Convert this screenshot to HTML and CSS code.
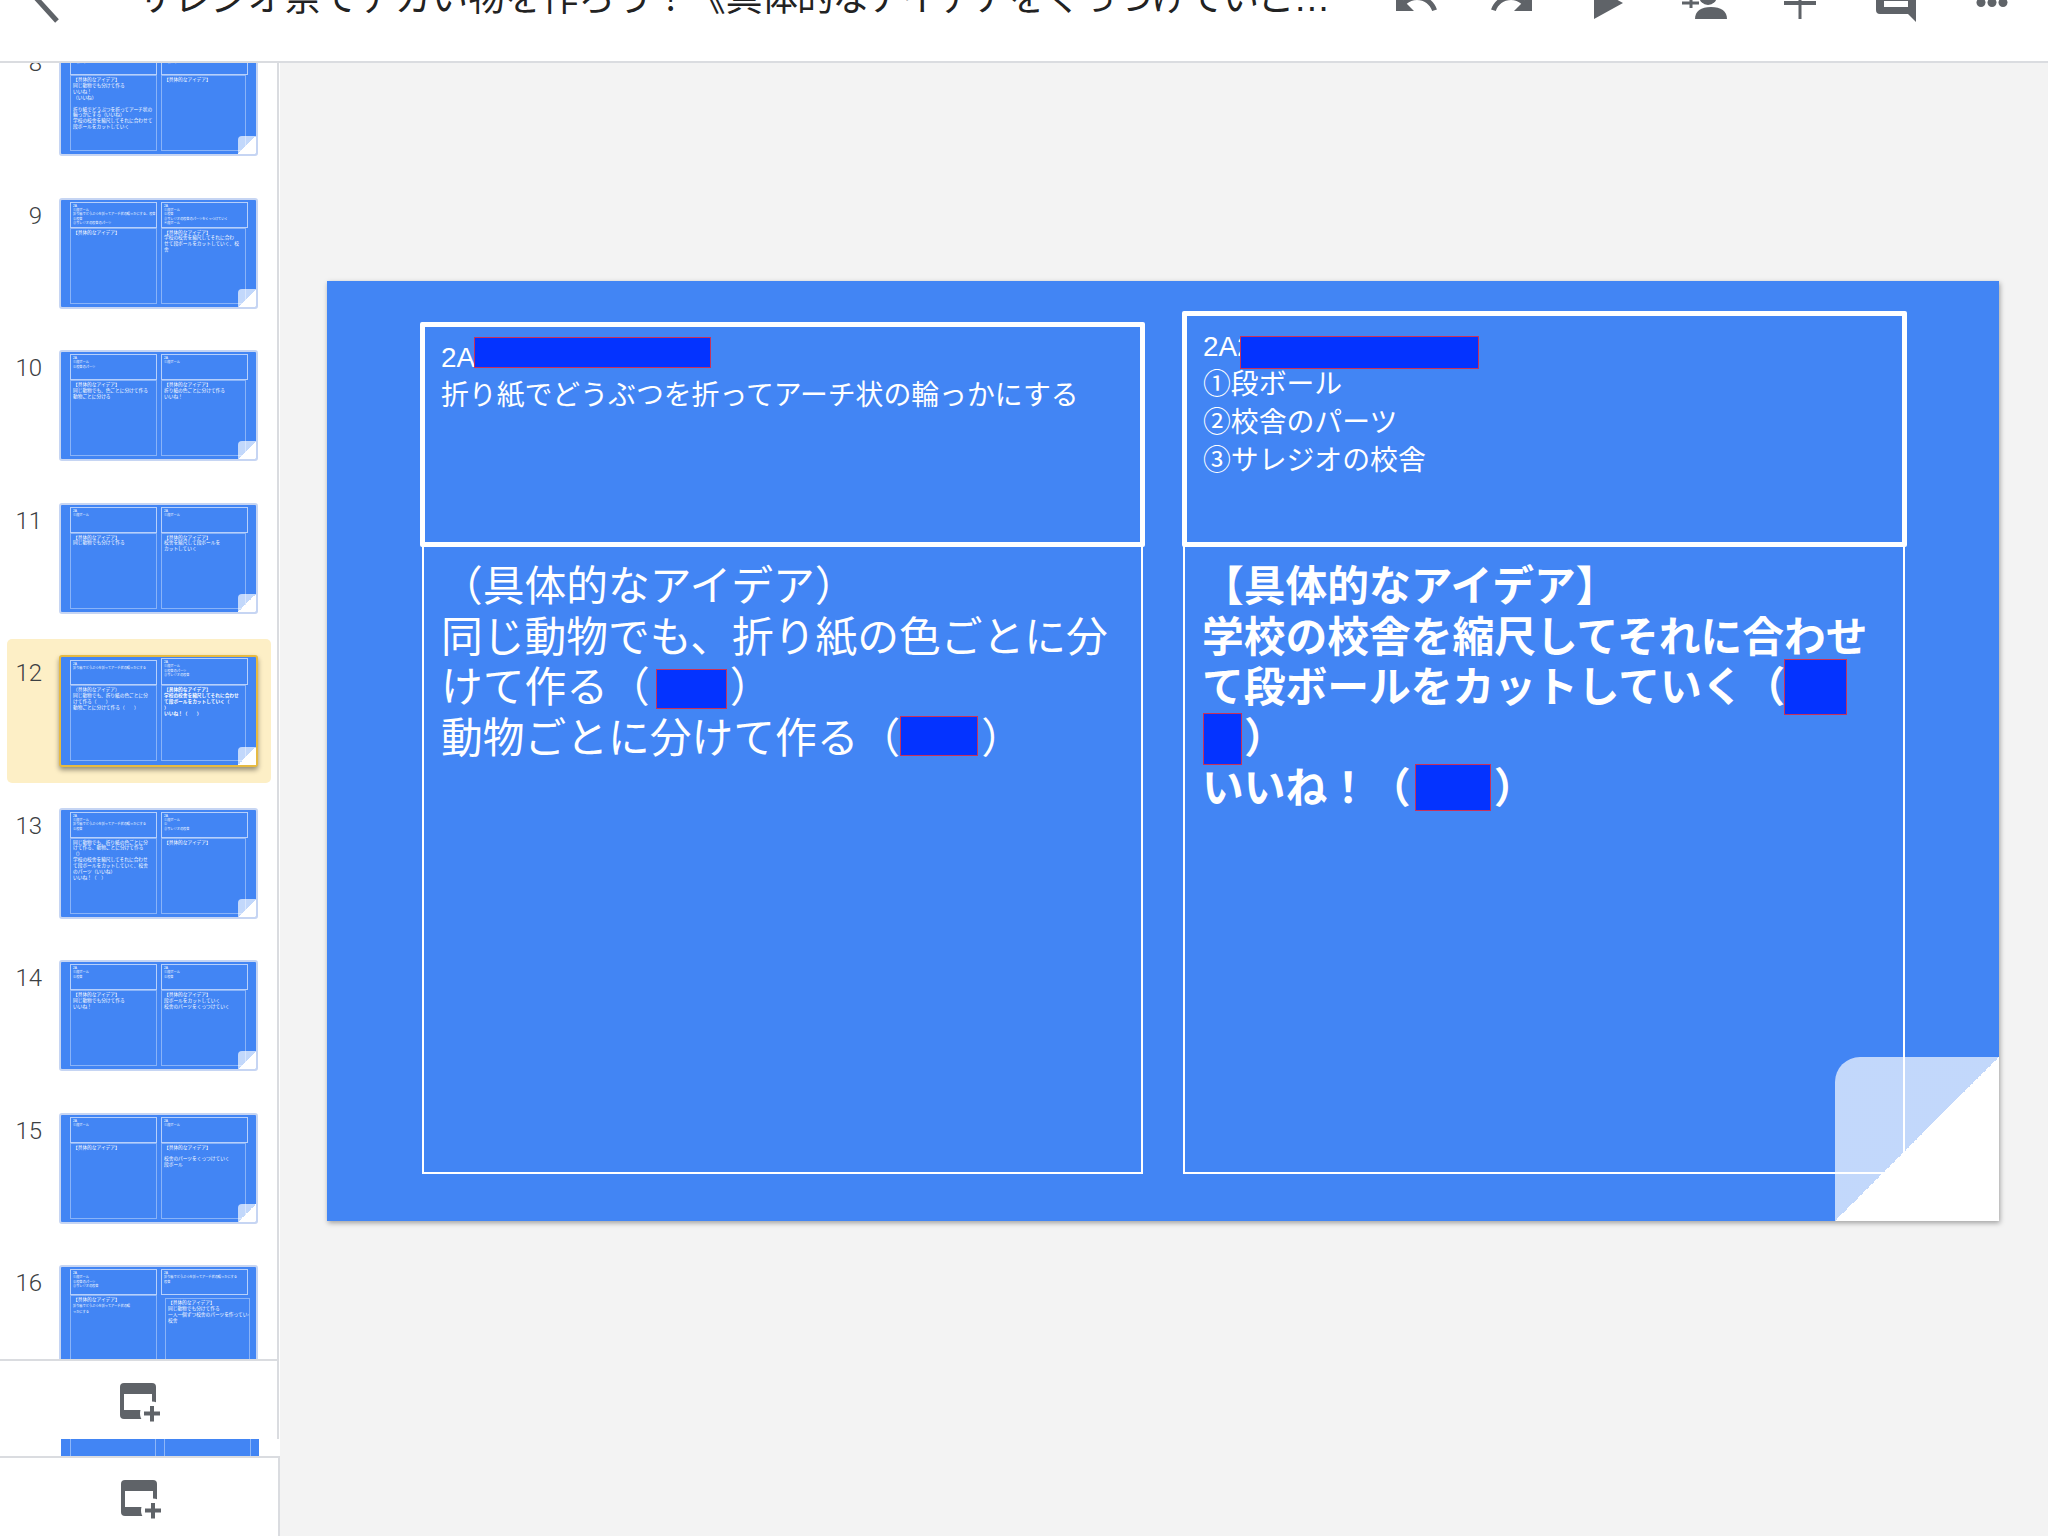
FILE: index.html
```html
<!DOCTYPE html>
<html lang="ja">
<head>
<meta charset="utf-8">
<title>Slides</title>
<link rel="stylesheet" href="styles.css">
</head>
<body>
<div class="app">
  <header class="header">
    <div class="bar">
      <svg class="back" viewBox="0 0 32 60" width="32" height="60"><path d="M26 8 L6 30 L26 52" /></svg>
      <div class="title">サレジオ祭でデカい物を作ろう！《<span class="title-rest">具体的なアイデアをくっつけていこ…</span></div>
      <div class="tools">
        <span class="tool"><svg viewBox="0 0 48 44" width="48" height="44"><path transform="scale(2)" d="M12.5 8c-2.65 0-5.05.99-6.9 2.6L2 7v9h9l-3.62-3.62c1.39-1.16 3.16-1.88 5.12-1.88 3.54 0 6.55 2.31 7.6 5.5l2.37-.78C21.08 11.03 17.15 8 12.5 8z"/></svg></span>
        <span class="tool"><svg viewBox="0 0 48 44" width="48" height="44"><path transform="scale(2)" d="M18.4 10.6C16.55 8.99 14.15 8 11.5 8c-4.65 0-8.58 3.03-9.96 7.22L3.9 16c1.05-3.19 4.05-5.5 7.6-5.5 1.95 0 3.73.72 5.12 1.88L13 16h9V7l-3.6 3.6z"/></svg></span>
        <span class="tool"><svg viewBox="0 0 48 44" width="48" height="44"><path d="M10 8 L39 24 L10 40 Z"/></svg></span>
        <span class="tool"><svg viewBox="0 0 48 44" width="48" height="44"><circle cx="28" cy="17" r="9"/><path d="M15 40 C15 32 21 28 31 28 C41 28 47 32 47 40 Z"/><path d="M2 22.5 H9.5 V15 H12.5 V22.5 H19 V25.5 H12.5 V29 H9.5 V25.5 H2 Z"/></svg></span>
        <span class="tool"><svg viewBox="0 0 48 44" width="48" height="44"><path d="M8 22 H22.5 V8 H25.5 V22 H40 V26 H25.5 V40 H22.5 V26 H8 Z"/></svg></span>
        <span class="tool"><svg viewBox="0 0 48 44" width="48" height="44"><path d="M8 4 H40 Q44 4 44 8 V43 L36 35 H8 Q4 35 4 31 V8 Q4 4 8 4 Z"/><rect class="cut" x="12" y="22" width="24" height="6"/></svg></span>
        <span class="tool"><svg viewBox="0 0 48 44" width="48" height="44"><circle cx="13" cy="23.5" r="4.5"/><circle cx="24" cy="23.5" r="4.5"/><circle cx="35" cy="23.5" r="4.5"/></svg></span>
      </div>
    </div>
  </header>
  <div class="workspace">
    <aside class="sidebar">
      <div class="list">
        <div class="list-inner">
          <div class="row"><span class="num">8</span><div class="thumb"><div class="mini box-tl">2A<br>①段ボール<br>②校舎のパーツ</div><div class="mini box-tr">2A<br>①段ボール<br>②校舎のパーツ</div><div class="mini box-bl">【具体的なアイデア】<br>同じ動物でも分けて作る<br>いいね！<br>（いいね）<br><br>折り紙でどうぶつを折ってアーチ状の<br>輪っかにする（いいね）<br>学校の校舎を縮尺してそれに合わせて<br>段ボールをカットしていく</div><div class="mini box-br">【具体的なアイデア】</div><div class="thumb-fold"></div></div></div>
          <div class="row"><span class="num">9</span><div class="thumb"><div class="mini box-tl">2A<br>①段ボール<br>折り紙でどうぶつを折ってアーチ状の輪っかにする、校舎<br>②校舎<br>③サレジオの校舎のパーツ</div><div class="mini box-tr">2A<br>①段ボール<br>②校舎<br>③サレジオの校舎のパーツをくっつけていく<br>④段ボール</div><div class="mini box-bl">【具体的なアイデア】</div><div class="mini box-br">【具体的なアイデア】<br>学校の校舎を縮尺してそれに合わ<br>せて段ボールをカットしていく、校<br>舎</div><div class="thumb-fold"></div></div></div>
          <div class="row"><span class="num">10</span><div class="thumb"><div class="mini box-tl">2A<br>①段ボール<br>②校舎のパーツ</div><div class="mini box-tr">2A<br>①段ボール</div><div class="mini box-bl">【具体的なアイデア】<br>同じ動物でも、色ごとに分けて作る<br>動物ごとに分ける</div><div class="mini box-br">【具体的なアイデア】<br>折り紙の色ごとに分けて作る<br>いいね！</div><div class="thumb-fold"></div></div></div>
          <div class="row"><span class="num">11</span><div class="thumb"><div class="mini box-tl">2A<br>①段ボール</div><div class="mini box-tr">2A<br>①段ボール</div><div class="mini box-bl">【具体的なアイデア】<br>同じ動物でも分けて作る</div><div class="mini box-br">【具体的なアイデア】<br>校舎を縮尺して段ボールを<br>カットしていく</div><div class="thumb-fold"></div></div></div>
          <div class="row row-active"><span class="num">12</span><div class="thumb thumb-active"><div class="mini box-tl box-low">2A<br>折り紙でどうぶつを折ってアーチ状の輪っかにする</div><div class="mini box-tr box-tall">2A<br>①段ボール<br>②校舎のパーツ<br>③サレジオの校舎</div><div class="mini box-bl">（具体的なアイデア）<br>同じ動物でも、折り紙の色ごとに分<br>けて作る（　　）<br>動物ごとに分けて作る（　　）</div><div class="mini box-br"><b>【具体的なアイデア】<br>学校の校舎を縮尺してそれに合わせ<br>て段ボールをカットしていく（<br>）<br>いいね！（　　）</b></div><div class="thumb-fold"></div></div></div>
          <div class="row"><span class="num">13</span><div class="thumb"><div class="mini box-tl">2A<br>①段ボール<br>折り紙でどうぶつを折ってアーチ状の輪っかにする<br>②校舎</div><div class="mini box-tr">2A<br>①段ボール<br>②<br>③サレジオの校舎</div><div class="mini box-bl">同じ動物でも、折り紙の色ごとに分<br>けて作る、動物ごとに分けて作る<br>（）<br>学校の校舎を縮尺してそれに合わせ<br>て段ボールをカットしていく、校舎<br>のパーツ（いいね）<br>いいね！（　）</div><div class="mini box-br">【具体的なアイデア】</div><div class="thumb-fold"></div></div></div>
          <div class="row"><span class="num">14</span><div class="thumb"><div class="mini box-tl">2A<br>①段ボール<br>②校舎</div><div class="mini box-tr">2A<br>①段ボール<br>②校舎</div><div class="mini box-bl">【具体的なアイデア】<br>同じ動物でも分けて作る<br>いいね！</div><div class="mini box-br">【具体的なアイデア】<br>段ボールをカットしていく<br>校舎のパーツをくっつけていく</div><div class="thumb-fold"></div></div></div>
          <div class="row"><span class="num">15</span><div class="thumb"><div class="mini box-tl">2A<br>①段ボール</div><div class="mini box-tr">2A<br>①段ボール</div><div class="mini box-bl">【具体的なアイデア】</div><div class="mini box-br">【具体的なアイデア】<br><br>校舎のパーツをくっつけていく<br>段ボール</div><div class="thumb-fold"></div></div></div>
          <div class="row"><span class="num">16</span><div class="thumb"><div class="mini box-tl">2A<br>①段ボール<br>②校舎のパーツ<br>③サレジオの校舎</div><div class="mini box-tr">2A<br>折り紙でどうぶつを折ってアーチ状の輪っかにする<br>校舎</div><div class="mini box-bl">【具体的なアイデア】<br><span class="tiny">折り紙でどうぶつを折ってアーチ状の輪<br>っかにする</span></div><div class="mini box-br box-shift">【具体的なアイデア】<br>同じ動物でも分けて作る<br>一人一個ずつ校舎のパーツを作っていく<br>校舎</div></div></div>
        </div>
      </div>
      <div class="add-band">
        <svg class="add-icon" viewBox="0 0 42 40" width="42" height="40"><rect width="36" height="36" rx="4"/><rect class="cut" x="4" y="11" width="28" height="16"/><circle class="cut" cx="32" cy="30.5" r="12"/><path d="M30 23 H34 V28.5 H40 V32.5 H34 V38.5 H30 V32.5 H24 V28.5 H30 Z"/></svg>
      </div>
      <div class="strip"><div class="strip-blue"><i></i><i></i><i></i><i></i></div></div>
      <div class="add-band add-band-last">
        <svg class="add-icon" viewBox="0 0 42 40" width="42" height="40"><rect width="36" height="36" rx="4"/><rect class="cut" x="4" y="11" width="28" height="16"/><circle class="cut" cx="32" cy="30.5" r="12"/><path d="M30 23 H34 V28.5 H40 V32.5 H34 V38.5 H30 V32.5 H24 V28.5 H30 Z"/></svg>
      </div>
    </aside>
    <main class="canvas">
      <section class="slide">
        <div class="lower lower-left">（具体的なアイデア）<br>同じ動物でも、折り紙の色ごとに分<br>けて作る（<span class="gap gap-a"></span>）<br>動物ごとに分けて作る（<span class="gap gap-a2"></span>）</div>
        <div class="lower lower-right">【具体的なアイデア】<br>学校の校舎を縮尺してそれに合わせ<br>て段ボールをカットしていく（<br><span class="gap gap-b"></span>）<br>いいね！（<span class="gap gap-c"></span>）</div>
        <div class="upper upper-left">2A<br>折り紙でどうぶつを折ってアーチ状の輪っかにする</div>
        <div class="upper upper-right">2A2<br>①段ボール<br>②校舎のパーツ<br>③サレジオの校舎</div>
        <div class="mask m1"></div>
        <div class="mask m2"></div>
        <div class="mask m3"></div>
        <div class="mask m4"></div>
        <div class="mask m5"></div>
        <div class="mask m6"></div>
        <div class="mask m7"></div>
        <div class="slide-fold"></div>
      </section>
    </main>
  </div>
</div>
</body>
</html>
```
FILE: styles.css
```css
* { box-sizing: border-box; }
html, body { margin: 0; height: 100%; overflow: hidden; }
body {
  background: #fff;
  font-family: "Liberation Sans", "Noto Sans CJK JP", sans-serif;
  color: #202124;
}
.app { display: flex; flex-direction: column; width: 2048px; height: 1536px; }

/* header, scrolled partly above the viewport */
.header {
  flex: none;
  height: 63px;
  border-bottom: 2px solid #dadce0;
  overflow: hidden;
  background: #fff;
}
.bar {
  display: flex;
  align-items: center;
  height: 60px;
  margin-top: -31px;
  padding-left: 31px;
}
.back { flex: none; }
.back path { fill: none; stroke: #5f6368; stroke-width: 5; }
.title {
  flex: none;
  width: 1200px;
  margin-left: 74px;
  font-size: 36.8px;
  line-height: 44px;
  white-space: nowrap;
  color: #222;
}
.title-rest { letter-spacing: -1.2px; }
.tools {
  display: flex;
  align-self: flex-start;
  margin-left: 31px;
  padding-top: 10px;
}
.tool { width: 96px; display: flex; justify-content: center; }
.tool svg { display: block; fill: #5f6368; overflow: visible; }
.cut { fill: #fff; }

/* layout */
.workspace { flex: 1; display: flex; min-height: 0; }
.sidebar {
  flex: none;
  width: 280px;
  display: flex;
  flex-direction: column;
  background: #fff;
}
.list {
  flex: 1;
  min-height: 0;
  overflow: hidden;
  margin-right: 1px;
  border-right: 2px solid #dadce0;
}
.list-inner { margin-top: -34px; padding: 0 6px 0 7px; }
.row {
  display: flex;
  align-items: flex-start;
  height: 144px;
  margin-bottom: 8.5px;
  padding-top: 16px;
  border-radius: 5px;
}
.row-active { background: #fdefc6; }
.num {
  flex: none;
  width: 35px;
  margin-top: 5px;
  margin-right: 17px;
  text-align: right;
  font-family: Roboto, "Liberation Sans", sans-serif;
  font-weight: 300;
  font-size: 24px;
  line-height: 27px;
  color: #3c4043;
}

/* thumbnails: miniature slides */
.thumb {
  position: relative;
  flex: none;
  width: 199px;
  height: 111px;
  background: #4285f4;
  border: 2px solid #c6d5f3;
  border-radius: 3px;
  overflow: hidden;
  color: #fff;
}
.thumb-active {
  border-color: #e6ba42;
  height: 112px;
  overflow: visible;
  box-shadow: 0 3px 5px rgba(0, 0, 0, .4);
}
.mini {
  position: absolute;
  overflow: hidden;
  padding: 1px 2px;
  white-space: nowrap;
  font-size: 3.2px;
  line-height: 4.4px;
}
.box-tl, .box-tr {
  top: 2px;
  width: 87px;
  height: 26px;
  border: 1px solid rgba(255, 255, 255, .62);
}
.box-tl { left: 9px; }
.box-tr { left: 100px; }
.box-low { top: 3px; height: 25px; }
.box-tall { top: 1px; height: 27px; }
.box-bl, .box-br {
  top: 28px;
  height: 76px;
  border: 1px solid rgba(255, 255, 255, .38);
  font-size: 4.7px;
  line-height: 5.9px;
}
.box-bl { left: 9px; width: 87px; }
.box-br { left: 100px; width: 85px; }
.box-shift { left: 104px; top: 31px; height: 73px; }
.tiny { font-size: 3.2px; line-height: 3.6px; }
.thumb-fold {
  position: absolute;
  right: 0;
  bottom: 0;
  width: 18px;
  height: 18px;
  border-top-left-radius: 4px;
  background: linear-gradient(to bottom right, rgba(255, 255, 255, .68) 50%, #fff 50%);
}

/* add-slide bands */
.add-band {
  flex: none;
  height: 80px;
  padding: 22px 0 0 120px;
  background: #fff;
  border-top: 2px solid #dadce0;
  border-right: 2px solid #dadce0;
  margin-right: 1px;
}
.add-band-last { margin-right: 0; padding-left: 121px; }
.add-icon { display: block; fill: #5f6368; }
.strip {
  flex: none;
  height: 17px;
  padding-left: 61px;
  margin-right: 1px;
  border-right: 2px solid #fff;
}
.strip-blue {
  position: relative;
  width: 198px;
  height: 17px;
  background: #4285f4;
  display: flex;
  gap: 0;
}
.strip-blue i { display: block; height: 17px; border-right: 1px solid rgba(255, 255, 255, .4); }
.strip-blue i:nth-child(1) { width: 10px; }
.strip-blue i:nth-child(2) { width: 85px; }
.strip-blue i:nth-child(3) { width: 9px; }
.strip-blue i:nth-child(4) { width: 86px; }

/* main canvas */
.canvas {
  flex: 1;
  background: #f3f3f3;
  padding: 218px 0 0 47px;
}
.slide {
  position: relative;
  width: 1672px;
  height: 940px;
  background: #4285f4;
  color: #fff;
  box-shadow: 1px 2px 5px rgba(0, 0, 0, .35);
}
.upper, .lower { position: absolute; white-space: nowrap; }
.upper {
  top: 41px;
  width: 725px;
  height: 225px;
  padding: 12px 16px;
  border: 5px solid #fff;
  border-radius: 2px;
  font-size: 27.85px;
  line-height: 38px;
}
.upper-left { left: 93px; }
.upper-right { left: 855px; top: 30px; height: 236px; }
.lower {
  top: 264px;
  height: 629px;
  padding: 15px 17px;
  border: 2px solid #fff;
  font-size: 41.75px;
  line-height: 50.6px;
}
.lower-left { left: 95px; width: 721px; }
.lower-right { left: 856px; width: 722px; font-weight: 700; }
.gap { display: inline-block; }
.gap-a { width: 80px; }
.gap-a2 { width: 81px; }
.gap-b { width: 42px; }
.gap-c { width: 83px; }

/* redaction rectangles laid over the slide */
.mask {
  position: absolute;
  background: #0433ff;
  border: 1px solid #c8325a;
}
.m1 { left: 147px; top: 56px; width: 237px; height: 31px; }
.m2 { left: 329px; top: 388px; width: 71px; height: 40px; }
.m3 { left: 573px; top: 435px; width: 78px; height: 40px; }
.m4 { left: 913px; top: 55px; width: 239px; height: 33px; }
.m5 { left: 1457px; top: 378px; width: 63px; height: 56px; }
.m6 { left: 876px; top: 432px; width: 39px; height: 52px; }
.m7 { left: 1088px; top: 483px; width: 76px; height: 47px; }
.slide-fold {
  position: absolute;
  right: 0;
  bottom: 0;
  width: 164px;
  height: 164px;
  border-top-left-radius: 25px;
  background: linear-gradient(to bottom right, rgba(255, 255, 255, .68) 50%, #fff 50%);
}
```
